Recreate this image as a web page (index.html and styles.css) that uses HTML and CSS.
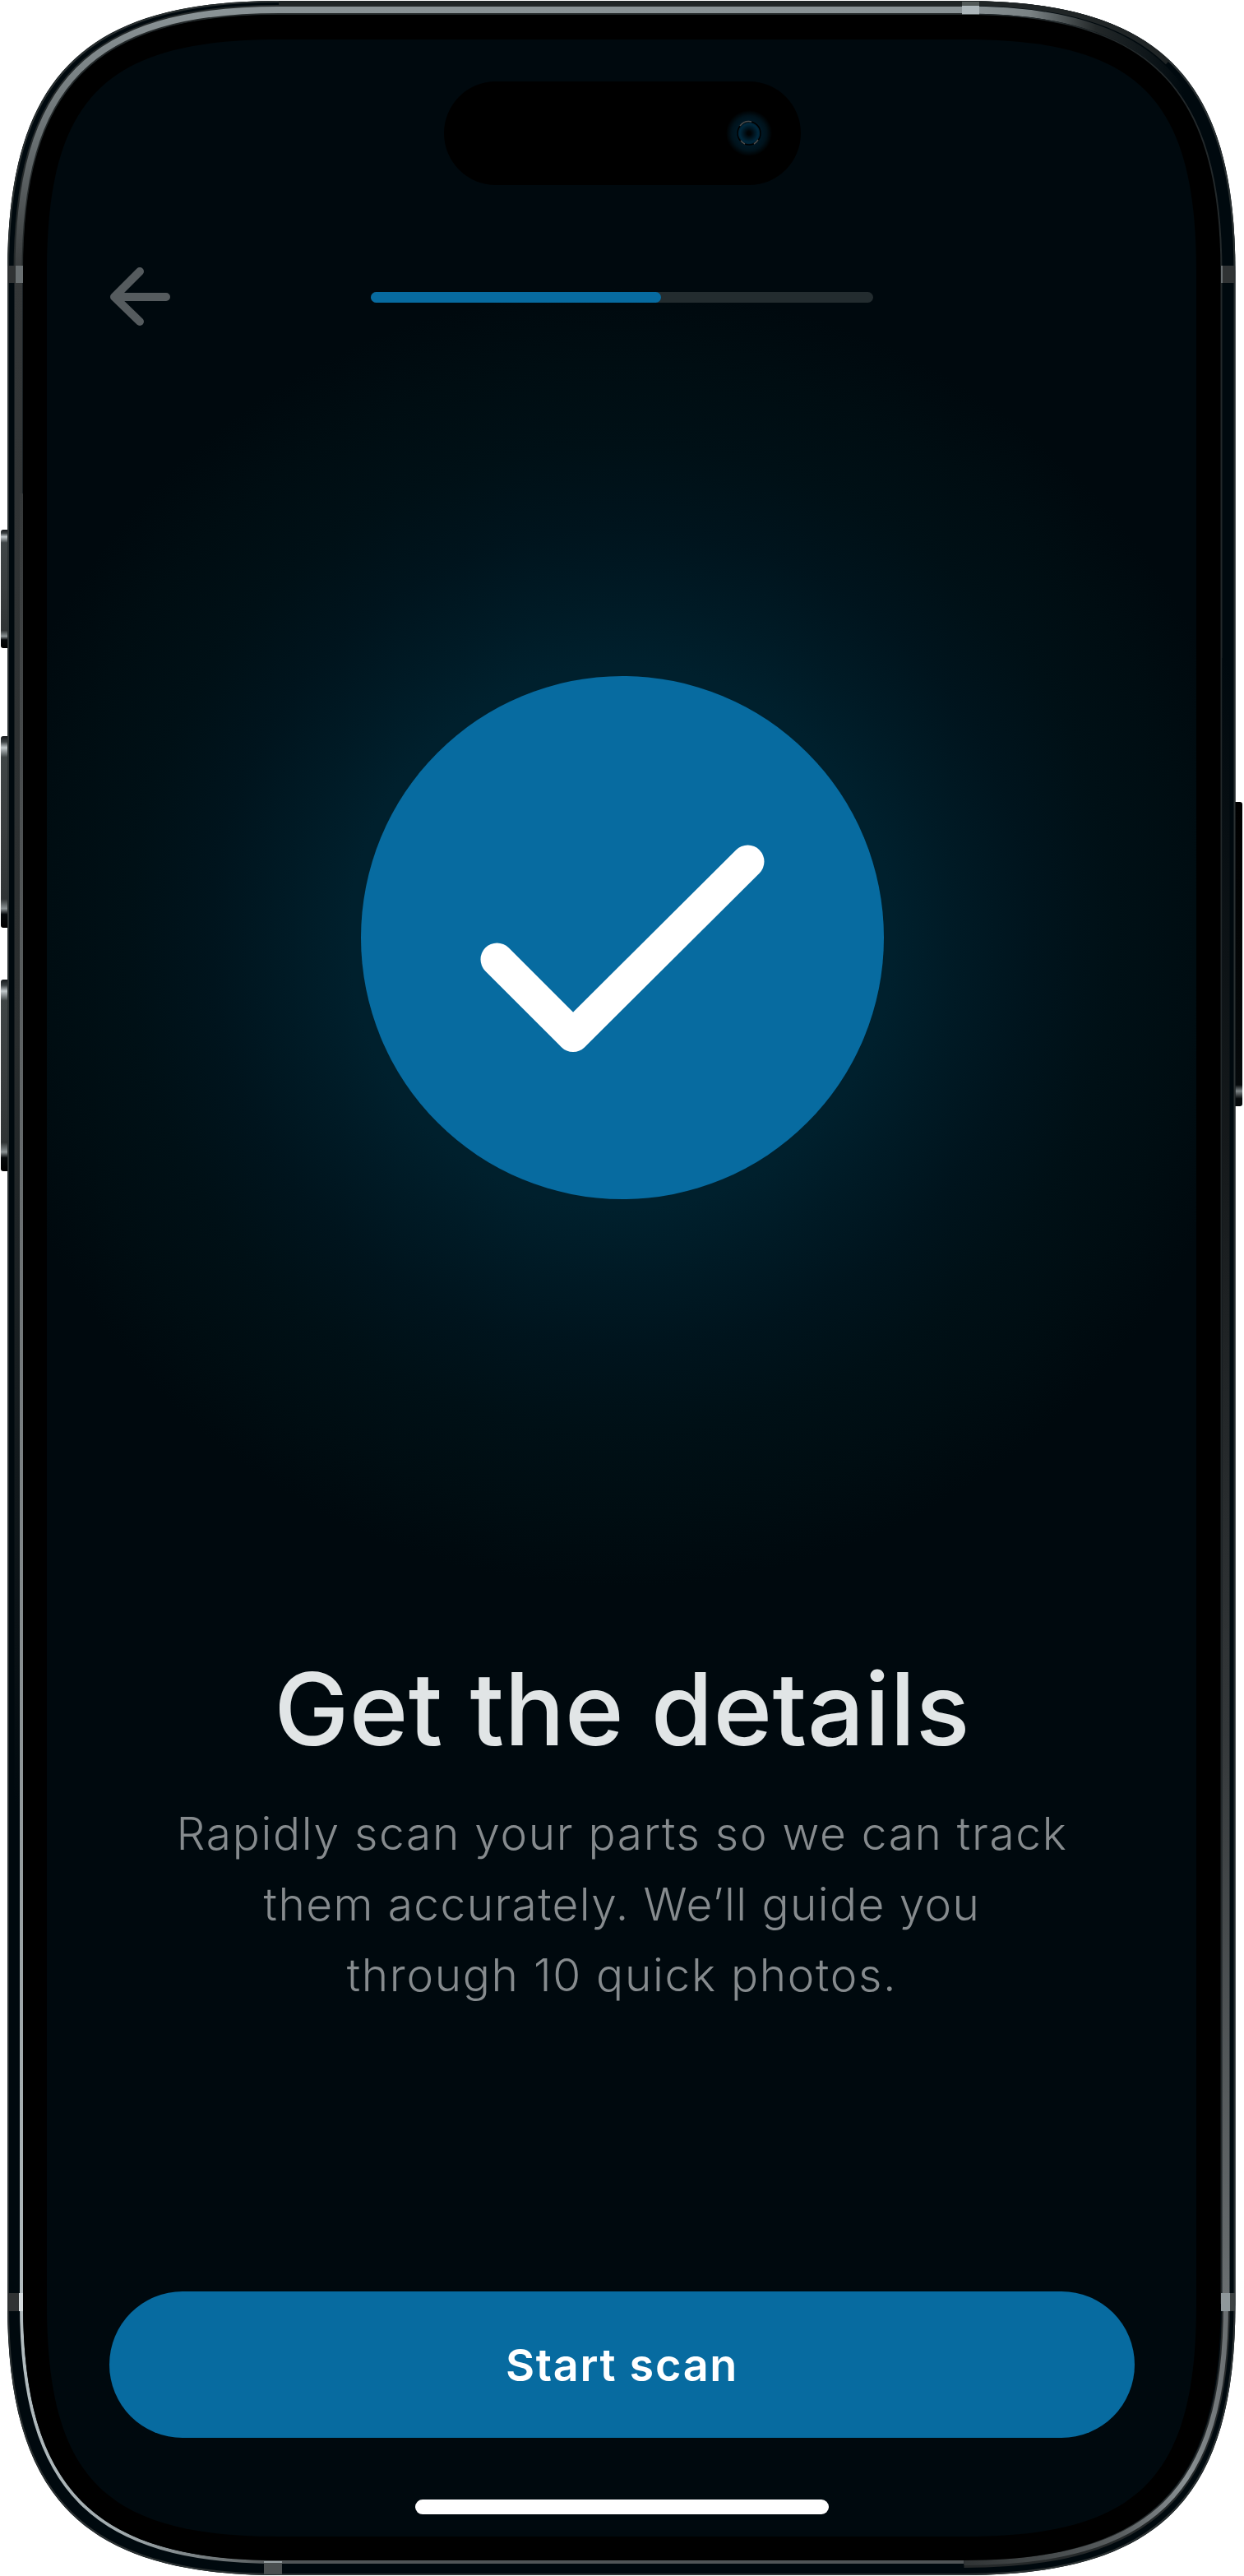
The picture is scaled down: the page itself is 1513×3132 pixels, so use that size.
FILE: index.html
```html
<!DOCTYPE html>
<html lang="en">
<head>
<meta charset="utf-8">
<title>Get the details</title>
<link rel="stylesheet" href="styles.css">
</head>
<body>
<div class="device">
  <svg class="frame" viewBox="0 0 1513 3132" aria-hidden="true">
    <defs>
      <linearGradient id="btn" x1="0" y1="0" x2="0" y2="1">
        <stop offset="0" stop-color="#15191b"/><stop offset=".03" stop-color="#3c4244"/><stop offset=".06" stop-color="#c3cacc"/><stop offset=".11" stop-color="#3f4546"/>
        <stop offset=".5" stop-color="#393d3e"/><stop offset=".85" stop-color="#303435"/><stop offset=".9" stop-color="#8c9395"/><stop offset=".93" stop-color="#06090b"/><stop offset="1" stop-color="#000"/>
      </linearGradient>
      <linearGradient id="power" x1="0" y1="0" x2="0" y2="1">
        <stop offset="0" stop-color="#000"/><stop offset=".93" stop-color="#05090b"/><stop offset=".95" stop-color="#7f8688"/><stop offset=".975" stop-color="#05090b"/>
      </linearGradient>
      <linearGradient id="topLeft" gradientUnits="userSpaceOnUse" x1="0" y1="12" x2="0" y2="340">
        <stop offset="0" stop-color="#8a9396"/><stop offset=".45" stop-color="#6c7375"/><stop offset="1" stop-color="#343738"/>
      </linearGradient>
      <linearGradient id="topRight" gradientUnits="userSpaceOnUse" x1="1172" y1="0" x2="1440" y2="0">
        <stop offset="0" stop-color="#8a9396"/><stop offset=".3" stop-color="#7a8284"/><stop offset=".6" stop-color="#232829"/><stop offset="1" stop-color="#00090e"/>
      </linearGradient>
      <linearGradient id="leftWide" gradientUnits="userSpaceOnUse" x1="0" y1="330" x2="0" y2="2200">
        <stop offset="0" stop-color="#343738"/><stop offset=".5" stop-color="#292d2e"/><stop offset="1" stop-color="#00090e"/>
      </linearGradient>
      <linearGradient id="leftThin" gradientUnits="userSpaceOnUse" x1="0" y1="600" x2="0" y2="2800">
        <stop offset="0" stop-color="#343738"/><stop offset=".4" stop-color="#6b7072"/><stop offset="1" stop-color="#b2bcbf"/>
      </linearGradient>
      <linearGradient id="bottomLeft" gradientUnits="userSpaceOnUse" x1="26" y1="0" x2="339" y2="0">
        <stop offset="0" stop-color="#b2bcbf"/><stop offset=".4" stop-color="#a0a9ac"/><stop offset="1" stop-color="#505557"/>
      </linearGradient>
      <linearGradient id="bottomRight" gradientUnits="userSpaceOnUse" x1="1172" y1="0" x2="1492" y2="0">
        <stop offset="0" stop-color="#303435"/><stop offset=".6" stop-color="#5a5f61"/><stop offset=".85" stop-color="#8a9194"/><stop offset="1" stop-color="#6a6f71"/>
      </linearGradient>
      <linearGradient id="right" gradientUnits="userSpaceOnUse" x1="0" y1="800" x2="0" y2="2801">
        <stop offset="0" stop-color="#00090e"/><stop offset=".3" stop-color="#15191b"/><stop offset=".65" stop-color="#34383a"/><stop offset="1" stop-color="#6a6f71"/>
      </linearGradient>
    </defs>
    <g fill="url(#btn)">
      <rect x="1" y="644" width="12" height="144" rx="3"/>
      <rect x="1" y="895" width="12" height="233" rx="3"/>
      <rect x="1" y="1191" width="12" height="233" rx="3"/>
    </g>
    <rect x="1499" y="975" width="12" height="370" rx="3" fill="url(#power)"/>
    <path d="M9 331C9 94 102 1 339 1H1172.500C1410 1 1502.500 94 1502.500 331V2801C1502.500 3038 1410 3131 1172.500 3131H339C102 3131 9 3038 9 2801Z" fill="#00090e"/>
    <path d="M10 331C10 95 103 2 339 2H1172.500C1409 2 1501.500 95 1501.500 331V2801C1501.500 3037 1409 3130 1172.500 3130H339C103 3130 10 3037 10 2801Z" fill="none" stroke="#2b3132" stroke-width="2"/>
    <path d="M339 4H1172.500C1290 4 1370 27 1420 76" fill="none" stroke="#202526" stroke-width="6"/>
    <g fill="none">
      <path d="M22.500 331V2200" stroke="url(#leftWide)" stroke-width="10"/>
      <path d="M22.500 331C22.500 102 111 12 339 12H1172.500" stroke="#232829" stroke-width="12"/>
      <path d="M22.500 331C22.500 102 111 12 339 12H1172.500" stroke="url(#topLeft)" stroke-width="8"/>
      <path d="M1172.500 12C1401 12 1490 102 1490 331" stroke="url(#topRight)" stroke-width="9"/>
      <path d="M1172.500 18C1397 18 1485 106 1485 331V2801" stroke="#23292b" stroke-width="3"/>
      <path d="M26 600V2801" stroke="url(#leftThin)" stroke-width="4"/>
      <path d="M26 2801C26 3027 114 3115 339 3115" stroke="url(#bottomLeft)" stroke-width="4"/>
      <path d="M339 3115H1172.500" stroke="#505557" stroke-width="4"/>
      <path d="M1172.500 3117C1400 3117 1491 3030 1491 2801" stroke="#25292a" stroke-width="10"/>
      <path d="M1172.500 3116C1400 3116 1491 3030 1491 2801" stroke="url(#bottomRight)" stroke-width="6"/>
      <path d="M1491 2801V800" stroke="url(#right)" stroke-width="9"/>
    </g>
    <path d="M28 331C28 106 115 18 339 18H1172.500C1397 18 1484.500 106 1484.500 331V2801C1484.500 3026 1397 3113 1172.500 3113H339C115 3113 28 3026 28 2801Z" fill="#000"/>
    <g class="bands">
      <rect x="9" y="323" width="10" height="21" fill="#303334"/><rect x="19" y="323" width="9" height="21" fill="#696f71"/>
      <rect x="1485" y="323" width="17" height="21" fill="#303334"/><rect x="1485" y="323" width="2" height="21" fill="#696f71"/>
      <rect x="9" y="2788" width="14" height="22" fill="#303334"/><rect x="23" y="2788" width="5" height="22" fill="#d5dbdd"/>
      <rect x="1485" y="2788" width="17" height="22" fill="#3c4142"/><rect x="1485" y="2788" width="11" height="22" fill="#8f989b"/>
      <rect x="1170" y="2" width="21" height="16" fill="#525958"/><rect x="1170" y="7" width="21" height="10" fill="#acb6ba"/>
      <rect x="321" y="3114" width="22" height="16" fill="#4a4f50"/><rect x="321" y="3114" width="22" height="2" fill="#9aa3a6"/>
    </g>
  </svg>

  <main class="screen">
    <div class="island">
      <svg class="camera" viewBox="0 0 60 60" aria-hidden="true">
        <defs>
          <radialGradient id="halo"><stop offset=".45" stop-color="#001a28"/><stop offset=".75" stop-color="#00121b"/><stop offset="1" stop-color="#000"/></radialGradient>
          <radialGradient id="lens"><stop offset=".15" stop-color="#000305"/><stop offset=".8" stop-color="#00283d"/><stop offset="1" stop-color="#001a28"/></radialGradient>
        </defs>
        <circle cx="30" cy="30" r="28" fill="url(#halo)"/>
        <circle cx="30" cy="30" r="14" fill="url(#lens)" stroke="#000" stroke-width="1.500"/>
        <path d="M19 21A14 14 0 0 1 33 16M20 39A14 14 0 0 0 25 43M36 43A14 14 0 0 0 41 38" fill="none" stroke="#4a4d4e" stroke-width="1.500"/>
      </svg>
    </div>

    <header class="topbar">
      <button class="back" aria-label="Back">
        <svg viewBox="0 0 76 72"><path d="M37 5 6 36 37 66M6 36H69" fill="none" stroke="#555b5e" stroke-width="10" stroke-linecap="round" stroke-linejoin="round"/></svg>
      </button>
      <div class="progress"><div class="progress-fill"></div></div>
      <div></div>
    </header>

    <div class="badge">
      <svg viewBox="0 0 636 636" aria-hidden="true"><path d="M165.500 344.500 258 437 470.500 225.500" fill="none" stroke="#fff" stroke-width="40" stroke-linecap="round" stroke-linejoin="round"/></svg>
    </div>

    <h1 class="title">Get the details</h1>
    <p class="copy">
      <span class="line-a">Rapidly scan your parts so we can track</span>
      <span class="line-b">them accurately. We’ll guide you</span>
      <span class="line-c">through 10 quick photos.</span>
    </p>

    <button class="cta">Start scan</button>
    <div class="home"></div>
  </main>
</div>
</body>
</html>
```
FILE: styles.css
```css
* { box-sizing: border-box; }

body {
  margin: 0;
  background: #fff;
  font-family: Inter, "Liberation Sans", sans-serif;
}

button {
  border: 0;
  padding: 0;
  font: inherit;
}

.device {
  position: relative;
  width: 1513px;
  height: 3132px;
  padding: 48px 58px 48px 57px;
}

.frame {
  position: absolute;
  inset: 0;
  width: 100%;
  height: 100%;
}

.screen {
  position: relative;
  display: flex;
  flex-direction: column;
  align-items: center;
  height: 3036px;
  padding: 51px 75px 27px 76px;
  background:
    radial-gradient(circle at 699px 1092px,
      #00202d 0, #00202d 330px, #001a25 410px, #00141d 500px, #001016 600px,
      #000d12 700px, #00090e 790px);
  clip-path: path("M0 283C0 71 71 0 282 0H1116C1327 0 1398 71 1398 283V2753C1398 2965 1327 3036 1116 3036H282C71 3036 0 2965 0 2753Z");
}

.island {
  display: flex;
  justify-content: flex-end;
  align-items: center;
  width: 434px;
  height: 126px;
  padding-right: 33px;
  border-radius: 63px;
  background: #000;
}

.camera { width: 60px; height: 60px; }

.topbar {
  display: grid;
  grid-template-columns: 1fr 611px 1fr;
  align-items: center;
  width: 100%;
  height: 72px;
  margin-top: 100px;
}

.back { width: 76px; height: 72px; background: none; }
.back svg { display: block; width: 76px; height: 72px; }

.progress {
  height: 13px;
  border-radius: 7px;
  background: #232c2f;
}

.progress-fill {
  width: 353px;
  height: 100%;
  border-radius: 7px;
  background: #076ba0;
}

.badge {
  width: 636px;
  height: 636px;
  margin-top: 425px;
  border-radius: 50%;
  background: #076ba0;
}

.badge svg { display: block; width: 100%; height: 100%; }

.title {
  margin: 545px 0 0;
  font-size: 122px;
  line-height: 150px;
  font-weight: 500;
  letter-spacing: 0.3px;
  color: #e1e5e6;
  white-space: nowrap;
}

.copy {
  display: flex;
  flex-direction: column;
  align-items: center;
  margin: 33px 0 0;
  font-size: 55px;
  line-height: 86px;
  font-weight: 300;
  color: #868b8e;
  white-space: nowrap;
}

.line-a { letter-spacing: 1.7px; }
.line-b { letter-spacing: 1.4px; }
.line-c { letter-spacing: 1.7px; }

.cta {
  width: 100%;
  height: 178px;
  margin-top: auto;
  border-radius: 89px;
  background: #076ba0;
  color: #fff;
  font-size: 54px;
  font-weight: 600;
  letter-spacing: 1.7px;
}

.home {
  width: 503px;
  height: 18px;
  margin-top: 75px;
  border-radius: 9px;
  background: #fff;
}
```
